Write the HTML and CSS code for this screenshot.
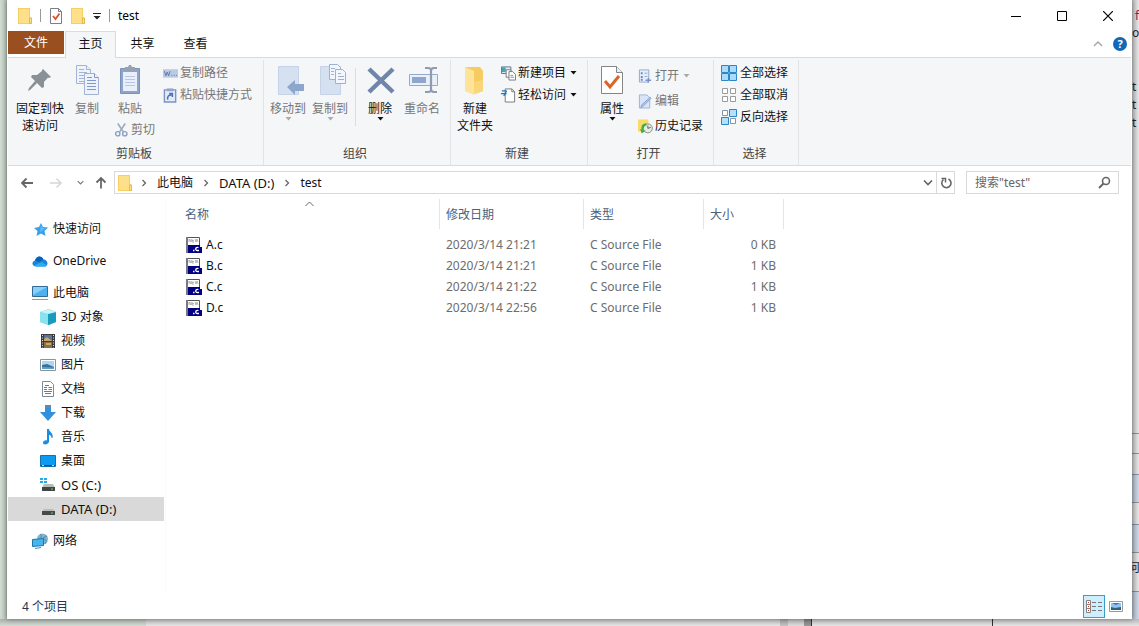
FILE: index.html
```html
<!DOCTYPE html>
<html lang="zh-CN">
<head>
<meta charset="utf-8">
<title>test</title>
<link rel="stylesheet" href="styles.css">
</head>
<body>
<svg class="defs" aria-hidden="true">
  <symbol id="folder" viewBox="0 0 14 16"><path d="M0 0h12v9l2 1v6H0z" fill="#f6cf63"/><path d="M1 1h10v14H1z" fill="#ffe08a"/><path d="M11.500 10h2v5.500h-2z" fill="#fbe28f" stroke="#e5b94c"/></symbol>
  <symbol id="caret" viewBox="0 0 7 4"><path d="M0.500 0h6L3.500 3.500z" fill="currentColor"/></symbol>
  <symbol id="chev-r" viewBox="0 0 6 8"><path d="M1.500 1l3 3-3 3" fill="none" stroke="#666" stroke-width="1.300"/></symbol>
  <symbol id="chev-d" viewBox="0 0 10 7"><path d="M1 1.500l4 4 4-4" fill="none" stroke="currentColor" stroke-width="1.700"/></symbol>
  <symbol id="cfile" viewBox="0 0 16 16"><path d="M.5.500h13v15H.5z" fill="#fff" stroke="#555"/><path d="M0 0h2v16H0z" fill="#778"/><path d="M3 5V2l2 3V2M6 3.500h2M6 2v3h2M9 2l1 3 1-3 1 3" stroke="#999" stroke-width=".7" fill="none"/><path d="M2 8h12v2h2v6H2z" fill="#000080"/><path d="M12.500 10.500c-3-1-4 3-1 3h1.500M7 13.500h1.500" stroke="#fff" stroke-width="1.300" fill="none"/></symbol>
</svg>

<div class="desk desk-left"></div>

<main class="window">
  <header class="titlebar">
    <svg class="i-folder"><use href="#folder"/></svg>
    <span class="bar"></span>
    <button class="plain" aria-label="属性"><svg width="14" height="16" viewBox="0 0 14 16"><path d="M1.500.500h8l3 3v12h-11z" fill="#fff" stroke="#7d7d88"/><path d="M9.500.500v3h3" fill="none" stroke="#7d7d88"/><path d="M4 8l2.500 3L10.500 5.500" fill="none" stroke="#d4552a" stroke-width="1.800"/></svg></button>
    <button class="plain" aria-label="新建文件夹"><svg class="i-folder"><use href="#folder"/></svg></button>
    <button class="plain" aria-label="自定义快速访问工具栏"><svg width="8" height="8" viewBox="0 0 8 8"><path d="M0 1.500h8" stroke="#222"/><path d="M.5 4h7L4 7.500z" fill="#222"/></svg></button>
    <span class="bar"></span>
    <h1 class="title">test</h1>
    <div class="controls">
      <button class="control" aria-label="最小化"><svg width="10" height="10"><path d="M0 5.500h10" stroke="#000"/></svg></button>
      <button class="control" aria-label="最大化"><svg width="10" height="10"><path d="M.5.500h9v9h-9z" fill="none" stroke="#000"/></svg></button>
      <button class="control" aria-label="关闭"><svg width="10" height="10"><path d="M0 0l10 10M10 0L0 10" stroke="#000" stroke-width="1.200"/></svg></button>
    </div>
  </header>

  <nav class="tabs">
    <button class="tab tab-file">文件</button>
    <button class="tab tab-active">主页</button>
    <button class="tab">共享</button>
    <button class="tab">查看</button>
    <div class="tabs-end">
      <button class="plain" aria-label="折叠功能区"><svg width="10" height="6"><path d="M1 5l4-4 4 4" fill="none" stroke="#aaa" stroke-width="1.500"/></svg></button>
      <button class="help" aria-label="帮助">?</button>
    </div>
  </nav>

  <section class="ribbon">
    <div class="group group-first">
      <div class="tools">
        <button class="big wide"><svg viewBox="0 0 32 32"><path d="M19 5l8 8-2 1-1-.5-4 4.500v5l-2 1-5-5-7 7-2 1 1-3 6-7-4-4 1-2h5l5-4v-1z" fill="#899096"/></svg>固定到快速访问</button>
        <button class="big dim"><svg viewBox="0 0 32 32"><g fill="#eef3fb" stroke="#a3b4d2"><path d="M5.500 1.500h10l4 4v14h-14z"/><path d="M15.500 1.500v4h4M8 5.500h5M8 8.500h8M8 11.500h6M8 14.500h5M8 17.500h5"/><path d="M13.500 9.500h10l4 4v17h-14z"/><path d="M23.500 9.500v4h4M16 13.500h5M16 16.500h9M16 19.500h9M16 22.500h9M16 25.500h9" stroke="#7f9aca"/></g></svg>复制</button>
        <div class="stack stack-paste">
          <button class="big narrow dim"><svg viewBox="0 0 32 32"><path d="M6.500 4.500h19v25h-19z" fill="#8ea4cb" stroke="#7c91ba"/><path d="M9 8h14v19H9z" fill="#e9effa"/><path d="M11 12.500h10M11 15.500h10M11 18.500h10M11 21.500h10" stroke="#b7c6e2"/><path d="M11 3h3l1-2h2l1 2h3v4H11z" fill="#96a1b2"/></svg>粘贴</button>
          <button class="small dim"><svg viewBox="0 0 16 16"><path d="M4 1l6 9M12 1L6 10" stroke="#9aa8c0" stroke-width="1.700"/><circle cx="4" cy="12" r="2.300" fill="none" stroke="#8b9fc8" stroke-width="1.500"/><circle cx="11.500" cy="12" r="2.300" fill="none" stroke="#8b9fc8" stroke-width="1.500"/></svg>剪切</button>
        </div>
        <div class="stack">
          <button class="small dim"><svg viewBox="0 0 16 16"><path d="M0 4h16v9H0z" fill="#b9c9e6"/><path d="M1.500 6l1.500 5 1.500-4L6 11l1.500-5M9 10.500h1M11.500 10.500h1M14 10.500h1" stroke="#5d77ab" fill="none"/></svg>复制路径</button>
          <button class="small dim"><svg viewBox="0 0 16 16"><path d="M1.500 2.500h12v13h-12z" fill="#e4ebf7" stroke="#7b94c4" stroke-width="1.500"/><path d="M4 1h7v3H4z" fill="#93a5c6"/><path d="M5 13c-.5-4 1-5 4-5M6.500 6.500H10V10" stroke="#4d70b5" stroke-width="1.600" fill="none"/></svg>粘贴快捷方式</button>
        </div>
      </div>
      <div class="caption">剪贴板</div>
    </div>

    <div class="group">
      <div class="tools">
        <button class="big dim"><svg viewBox="0 0 32 32"><path d="M6.500 2.500h20v28h-20z" fill="#d5e0f0" stroke="#c5d3e8"/><path d="M15 23l8-7v4h9v7h-9v4z" fill="#8da6cc"/></svg>移动到<svg class="caret"><use href="#caret"/></svg></button>
        <button class="big dim"><svg viewBox="0 0 32 32"><path d="M6.500 2.500h20v28h-20z" fill="#d5e0f0" stroke="#c5d3e8"/><g fill="#f3f7fd" stroke="#9db1d3"><path d="M15.500.500h8l3 3v12h-11z"/><path d="M21.500 5.500h7l3 3v11h-10z"/><path d="M24 9.500h3M24 12.500h6M24 15.500h6M17 4.500h4M17 7.500h3M17 10.500h3"/></g></svg>复制到<svg class="caret"><use href="#caret"/></svg></button>
        <span class="split"></span>
        <button class="big"><svg viewBox="0 0 32 32"><path d="M5 5l24 23M29 5L5 28" stroke="#7085aa" stroke-width="4.500"/></svg>删除<svg class="caret"><use href="#caret"/></svg></button>
        <button class="big dim"><svg viewBox="0 0 32 32"><path d="M3.500 10.500h28v11h-28z" fill="#eaf0fa" stroke="#94aad2"/><path d="M6 13h14v6H6z" fill="#8fa5cd"/><path d="M19 4h3c3 0 3 1 3 3v18c0 2 0 3-3 3h-3M31 4h-3c-2 0-3 1-3 3M31 28h-3c-2 0-3-1-3-3" fill="none" stroke="#8e9bb0" stroke-width="2.200"/></svg>重命名</button>
      </div>
      <div class="caption">组织</div>
    </div>

    <div class="group">
      <div class="tools spaced">
        <button class="big"><svg viewBox="0 0 32 32"><path d="M6 3h15l3 4v20l-8 3-10-3z" fill="#f5cb62"/><path d="M6 3l9 4v24l-9-4z" fill="#ffe396"/><path d="M15 18l9-2v11l-9 3z" fill="#f9d779"/></svg>新建<br>文件夹</button>
        <div class="stack">
          <button class="small"><svg viewBox="0 0 16 16"><path d="M.5 1.500h10v7H.5z" fill="#dff2f7" stroke="#53758c"/><path d="M1 2h4v5H1z" fill="#4e9db3"/><path d="M5.500 4.500h5v8h-5z" fill="#fff" stroke="#777"/><path d="M8.500 6.500h4l3 3v6h-7z" fill="#fff" stroke="#777"/><path d="M10 10.500h3M10 12.500h4" stroke="#5e9bd0"/></svg>新建项目<svg class="caret"><use href="#caret"/></svg></button>
          <button class="small"><svg viewBox="0 0 16 16"><path d="M4.500 1.500h7l3 3v11h-10z" fill="#fff" stroke="#777"/><path d="M11.500 1.500v3h3" fill="none" stroke="#777"/><path d="M1 3.500h5M0 6.500h6M6 3.500L3 9" stroke="#2777b8" stroke-width="1.400" fill="none"/></svg>轻松访问<svg class="caret"><use href="#caret"/></svg></button>
        </div>
      </div>
      <div class="caption">新建</div>
    </div>

    <div class="group">
      <div class="tools spaced">
        <button class="big"><svg viewBox="0 0 32 32"><path d="M5.500 2.500h15l6 6v21h-21z" fill="#fff" stroke="#858585"/><path d="M20.500 2.500v6h6" fill="#eee" stroke="#858585"/><path d="M9 17l5 6 9-11" fill="none" stroke="#de6326" stroke-width="3"/></svg>属性<svg class="caret"><use href="#caret"/></svg></button>
        <div class="stack stack-loose">
          <button class="small dim"><svg viewBox="0 0 16 16"><path d="M1.500 1.500h10v13h-10z" fill="#e7eefa" stroke="#8fa7d1"/><path d="M3 4h2v2H3zM3 8h2v2H3zM3 11h2v2H3z" fill="#6c8cc5"/><path d="M7 5h3M7 8.500h3" stroke="#8fa7d1"/><path d="M8 12.500h6M11 10v5" stroke="#7894c4" stroke-width="1.500"/></svg>打开<svg class="caret"><use href="#caret"/></svg></button>
          <button class="small dim"><svg viewBox="0 0 16 16"><path d="M1.500 1.500h8l3 3v11h-11z" fill="#d9e5f6" stroke="#9eb2d7"/><path d="M14 5L5 14l-2 1 1-3 9-8z" fill="#b5c8e6" stroke="#6b8dc4" stroke-width=".7"/></svg>编辑</button>
          <button class="small"><svg viewBox="0 0 16 16"><path d="M0 1h11v13H0z" fill="#f9dc68"/><circle cx="10.500" cy="10.500" r="4.800" fill="#e6ebe7" stroke="#7d8b83"/><path d="M10.500 7.500v3l3-1" stroke="#555" fill="none"/><path d="M9 5c-5 0-6 4-5 7l-2-1 2 5 4-3-2-.5c-1-2 0-4 3-5z" fill="#4aab3e"/></svg>历史记录</button>
        </div>
      </div>
      <div class="caption">打开</div>
    </div>

    <div class="group group-last">
      <div class="tools">
        <div class="stack stack-select">
          <button class="small"><svg viewBox="0 0 16 16"><path d="M.5.500h7v7h-7zM8.500.500h7v7h-7zM.5 8.500h7v7h-7zM8.500 8.500h7v7h-7z" fill="#a9dbfa" stroke="#2f86c5"/></svg>全部选择</button>
          <button class="small"><svg viewBox="0 0 16 16"><path d="M1.500 1.500h5v5h-5zM9.500 1.500h5v5h-5zM1.500 9.500h5v5h-5zM9.500 9.500h5v5h-5z" fill="#fff" stroke="#9a9a9a"/></svg>全部取消</button>
          <button class="small"><svg viewBox="0 0 16 16"><path d="M8.500.500h7v7h-7zM.5 8.500h7v7h-7z" fill="#b5e0fb" stroke="#2f86c5"/><path d="M1.500 1.500h5v5h-5zM9.500 9.500h5v5h-5z" fill="#fff" stroke="#8397aa"/></svg>反向选择</button>
        </div>
      </div>
      <div class="caption">选择</div>
    </div>
  </section>

  <div class="addressrow">
    <div class="history">
      <button class="plain" aria-label="后退"><svg width="14" height="12"><path d="M13 6H2M6.500 1.500L2 6l4.500 4.500" fill="none" stroke="#666" stroke-width="1.800"/></svg></button>
      <button class="plain" aria-label="前进"><svg width="14" height="12"><path d="M1 6h11M7.500 1.500L12 6l-4.500 4.500" fill="none" stroke="#d6d6d6" stroke-width="1.500"/></svg></button>
      <button class="plain recent" aria-label="最近浏览的位置"><svg width="7" height="5" viewBox="0 0 10 7"><use href="#chev-d" width="10" height="7"/></svg></button>
      <button class="plain" aria-label="上移"><svg width="12" height="13"><path d="M6 12.500V2M1.500 6.500L6 2l4.500 4.500" fill="none" stroke="#666" stroke-width="1.800"/></svg></button>
    </div>
    <div class="address">
      <svg class="i-folder"><use href="#folder"/></svg>
      <svg class="chev"><use href="#chev-r"/></svg>
      <button class="plain crumb">此电脑</button>
      <svg class="chev"><use href="#chev-r"/></svg>
      <button class="plain crumb drive">DATA (D:)</button>
      <svg class="chev"><use href="#chev-r"/></svg>
      <button class="plain crumb">test</button>
      <button class="plain drop" aria-label="以前的位置"><svg width="10" height="7"><use href="#chev-d"/></svg></button>
      <button class="plain refresh" aria-label="刷新"><svg width="12" height="12"><path d="M8.500 2A4.600 4.600 0 1 1 3.500 2.500" fill="none" stroke="#666" stroke-width="1.600"/><path d="M1.500 1.500h4v4" fill="none" stroke="#666" stroke-width="1.500"/></svg></button>
    </div>
    <div class="search">
      <input type="text" aria-label="搜索" placeholder='搜索"test"'>
      <svg width="13" height="13"><circle cx="8" cy="5" r="3.500" fill="none" stroke="#666" stroke-width="1.600"/><path d="M5.500 7.500L1 12" stroke="#666" stroke-width="2"/></svg>
    </div>
  </div>

  <div class="content">
    <nav class="tree">
      <a class="node" href="#"><svg viewBox="0 0 16 16"><path d="M9 2l2 4 5 .5-3.500 3.500 1 5-4.500-2.500L4.500 15l1-5L2 7l5-1z" fill="#37a0ea"/><path d="M9 4l1.500 3 3 .5L8 11z" fill="#5cc0f8"/></svg>快速访问</a>
      <a class="node" href="#"><svg viewBox="0 0 16 16"><path d="M4 13.500C0 13.500-1 9 3 7.500 4 3 9 2 11.500 6.500c4 0 5.500 5 2 7z" fill="#1686dc"/><path d="M3 7.500C5 3 9 2 11.500 6.500L7 9z" fill="#0a62b8"/><path d="M2 12.500L10 9l5 3.500-1.500 1H4z" fill="#32aaf1"/></svg>OneDrive</a>
      <div class="branch">
        <a class="node" href="#"><svg viewBox="0 0 16 16"><path d="M.5 1.500h15v10H.5z" fill="#4db1ef" stroke="#356b93"/><path d="M1 2h14L1 10z" fill="#86d0fa"/><path d="M0 14.500h16" stroke="#8b9aa7"/></svg>此电脑</a>
        <a class="node sub" href="#"><svg viewBox="0 0 16 16"><path d="M0 3l9-3 7 3v10l-7 3-9-3z" fill="#42bdd8"/><path d="M0 3l8 2v11l-8-3z" fill="#8be2ef"/><path d="M8 5l8-2v10l-8 3z" fill="#199cbb"/><path d="M0 3l9-3 7 3-8 2z" fill="#c5f4fa"/></svg>3D 对象</a>
        <a class="node sub" href="#"><svg viewBox="0 0 16 16"><path d="M1 1h14v14H1z" fill="#3b3b42"/><path d="M4 2h8v6H4z" fill="#56759f"/><path d="M4 9h8v6H4z" fill="#88704a"/><path d="M4 6l3-2 5 4H4zM6 10h5v2H6z" fill="#cda85c"/><path d="M2.500 2v13M13.500 2v13" stroke="#ddd" stroke-dasharray="1 1.500"/></svg>视频</a>
        <a class="node sub" href="#"><svg viewBox="0 0 16 16"><path d="M.5 2.500h15v11H.5z" fill="#fff" stroke="#8793a0"/><path d="M2 4h12v8H2z" fill="#a6dbf8"/><path d="M2 8l5-1 7 3v1H2z" fill="#3e6f94"/><path d="M2 10l12 .5V12H2z" fill="#61a3c4"/></svg>图片</a>
        <a class="node sub" href="#"><svg viewBox="0 0 16 16"><path d="M2.500.500h8l3 3v12h-11z" fill="#fff" stroke="#7c8b99"/><path d="M5 4.500h4M4 6.500h3M8.500 6.500H12M4 8.500h3M8.500 8.500H12M4 10.500h8M5 12.500h6" stroke="#3988c7"/></svg>文档</a>
        <a class="node sub" href="#"><svg viewBox="0 0 16 16"><path d="M5 0h6v7h5l-8 9-8-9h5z" fill="#3291dc"/><path d="M5 0h6v3H5z" fill="#6189b0"/></svg>下载</a>
        <a class="node sub" href="#"><svg viewBox="0 0 16 16"><path d="M7 0h2c0 3 5 4 3.500 9h-1c0-2-1-3-2.500-3v7c-1 3-6 3-6 1s2-3 4-2.500z" fill="#188de4"/></svg>音乐</a>
        <a class="node sub" href="#"><svg viewBox="0 0 16 16"><path d="M.5 2.500h15v11H.5z" fill="#0d9bf1" stroke="#1770ad"/><path d="M1 12.500h14" stroke="#0a4e80"/><path d="M2 12.500h2M12 12.500h2" stroke="#b6e6ff"/></svg>桌面</a>
        <a class="node sub drive" href="#"><svg viewBox="0 0 16 16"><path d="M0 1h3v2H0zM4 1h3v2H4zM0 4h3v2H0zM4 4h3v2H4z" fill="#20aeea"/><path d="M4 7h9l2 4H2z" fill="#b9bbb9"/><path d="M2 10h13v4H2z" fill="#3f4643"/><path d="M11 12h2" stroke="#5fe071"/></svg>OS (C:)</a>
        <a class="node sub drive selected" href="#"><svg viewBox="0 0 16 16"><path d="M4 8h9l2 3H2z" fill="#bdbdbd"/><path d="M2 10h13v4H2z" fill="#484a49"/><path d="M11 12h2" stroke="#62d175"/></svg>DATA (D:)</a>
      </div>
      <a class="node" href="#"><svg viewBox="0 0 16 16"><circle cx="10.500" cy="6" r="5.500" fill="#7fb3cf"/><path d="M8 1c3 2-1 4 3 5s4 2 2 5M15 3l-4 2" stroke="#4e89a9" fill="none"/><path d="M.5 6.500l11-1v7l-11 1z" fill="#45b5ee" stroke="#1c77ad"/><path d="M3 15.500l6-1" stroke="#3d8ab8"/></svg>网络</a>
    </nav>

    <div class="files">
      <svg class="sort" width="9" height="6"><path d="M.5 5l4-4 4 4" fill="none" stroke="#666"/></svg>
      <table>
        <thead>
          <tr><th class="c-name"><div>名称</div></th><th class="c-date"><div>修改日期</div></th><th class="c-type"><div>类型</div></th><th class="c-size"><div>大小</div></th></tr>
        </thead>
        <tbody>
          <tr><td><span class="file"><svg><use href="#cfile"/></svg>A.c</span></td><td>2020/3/14 21:21</td><td>C Source File</td><td class="num">0 KB</td></tr>
          <tr><td><span class="file"><svg><use href="#cfile"/></svg>B.c</span></td><td>2020/3/14 21:21</td><td>C Source File</td><td class="num">1 KB</td></tr>
          <tr><td><span class="file"><svg><use href="#cfile"/></svg>C.c</span></td><td>2020/3/14 21:22</td><td>C Source File</td><td class="num">1 KB</td></tr>
          <tr><td><span class="file"><svg><use href="#cfile"/></svg>D.c</span></td><td>2020/3/14 22:56</td><td>C Source File</td><td class="num">1 KB</td></tr>
        </tbody>
      </table>
    </div>
  </div>

  <footer class="status">
    <span>4 个项目</span>
    <div class="views">
      <button class="view view-on" aria-label="详细信息"><svg width="16" height="14"><path d="M.5.500h4v4h-4zM.5 4.500h4v4h-4zM.5 8.500h4v4h-4z" fill="#fff" stroke="#8a8078"/><path d="M2 2.500h1M2 6.500h1M2 10.500h1" stroke="#b33"/><path d="M6 2.500h4M12 2.500h4M6 6.500h4M12 6.500h4M6 10.500h4M12 10.500h4" stroke="#777"/></svg></button>
      <button class="view" aria-label="大图标"><svg width="14" height="11"><path d="M.5.500h13v10H.5z" fill="#fff" stroke="#999"/><path d="M2 2h10v7H2z" fill="#8cc5f2"/><path d="M2 6l4 1 6-1v3H2z" fill="#2f6377"/><path d="M3 2h8l-4 2z" fill="#4668cf"/></svg></button>
    </div>
  </footer>
</main>

<div class="desk desk-right">
  <span class="scrap s1">f</span><span class="scrap s2">o</span><span class="scrap s3">t</span><span class="scrap s4">t</span><span class="scrap s5">t</span><span class="scrap s6">何</span>
</div>
<div class="desk desk-bottom"></div>
</body>
</html>
```

FILE: styles.css
```css
* { box-sizing: border-box; }

body {
  margin: 0;
  height: 100vh;
  display: grid;
  grid-template: minmax(0, 1fr) 7px / 7px minmax(0, 1fr) 7px;
  overflow: hidden;
  background: #dcdcdc;
  color: #111;
  font: 12px/18px "Noto Sans", "Noto Sans CJK SC", sans-serif;
}

button, input { font: inherit; color: inherit; margin: 0; padding: 0; border: 0; background: none; }
button { display: flex; }
svg { flex: none; display: block; }
.defs { position: absolute; width: 0; height: 0; }
.i-folder { width: 14px; height: 16px; }
.caret { width: 7px; height: 4px; }

/* Desktop behind the window */
.desk-left { background: linear-gradient(90deg, #d2dcd3, #bfcbc1 60%, #a9b5ab); }
.desk-right {
  position: relative;
  overflow: hidden;
  background:
    linear-gradient(90deg, #0003, #0000),
    linear-gradient(#e6e6e6 433px, #999 433px 434px, #e6e6e6 434px 453px, #999 453px 454px, #e6e6e6 454px 474px, #8c98ab 474px 475px, #cfd9e8 475px 502px, #999 502px 503px, #e6e6e6 503px 524px, #8c98ab 524px 525px, #cfd9e8 525px 552px, #999 552px 553px, #e6e6e6 553px 591px, #8c98ab 591px 592px, #cfd9e8 592px);
}
.scrap { position: absolute; left: 0; color: #223; }
.s1 { top: 7px; left: 3px; color: #824; }
.s2 { top: 24px; }
.s3 { top: 78px; }
.s4 { top: 96px; }
.s5 { top: 114px; }
.s6 { top: 559px; left: -4px; }
.desk-bottom {
  grid-column: 1 / -1;
  background:
    linear-gradient(#0003, #0000),
    linear-gradient(90deg, #d3dcd4 146px, #e6e6e6 146px 780px, #c4c4c4 780px 788px, #dedede 788px 804px, #999 804px 811px, #333 811px 812px, #e6e6e6 812px 992px, #333 992px 993px, #e6e6e6 993px);
}

.window {
  position: relative;
  z-index: 1;
  display: flex;
  flex-direction: column;
  min-width: 0;
  padding: 0 1px;
  background: #fff;
  box-shadow: 0 0 5px #0006;
}

.plain { align-items: center; justify-content: center; }
.drive { font-size: 13px; }

.titlebar { display: flex; align-items: center; gap: 8px; height: 31px; padding-left: 10px; }
.bar { width: 1px; height: 13px; background: #999; }
.title { margin: 0; font-size: 12px; font-weight: 400; color: #000; }
.controls { display: flex; align-self: stretch; margin-left: auto; }
.control { width: 46px; align-items: center; justify-content: center; }

.tabs { display: flex; height: 27px; border-bottom: 1px solid #dadbdc; }
.tab { width: 53px; height: 25px; align-items: center; justify-content: center; }
.tab-file { width: 56px; height: 23px; margin-right: 1px; background: #9a4f20; color: #fff; }
.tab-active { width: 51px; height: 27px; padding-bottom: 2px; background: #f5f6f7; border: 1px solid #dadbdc; border-bottom: 0; }
.tabs-end { display: flex; align-items: center; gap: 10px; margin-left: auto; padding-right: 4px; }
.help { width: 14px; height: 14px; border-radius: 50%; align-items: center; justify-content: center; background: #1468b5; color: #fff; font-size: 11px; font-weight: 700; line-height: 14px; }

.ribbon { display: flex; background: #f5f6f7; border-bottom: 1px solid #dadbdc; padding-top: 2px; }
.group { display: flex; flex-direction: column; padding: 0 10px 0 6px; border-right: 1px solid #e2e3e4; }
.group-first { padding: 0 11px 0 8px; }
.group-last { padding-left: 7px; }
.tools { display: flex; align-items: flex-start; gap: 6px; height: 85px; padding-top: 4px; }
.group-first .tools { gap: 5px; }
.tools.spaced { gap: 8px; }
.caption { align-self: center; height: 20px; line-height: 18px; color: #444; }
.big { display: flex; flex-direction: column; align-items: center; width: 36px; line-height: 17px; white-space: nowrap; }
.big > svg:first-child { width: 32px; height: 32px; margin-bottom: 4px; }
.wide { width: 48px; white-space: normal; }
.narrow { width: 32px; }
.dim { color: #777; }
.dim .caret { color: #aaa; }
.stack { display: flex; flex-direction: column; gap: 4px; }
.stack-paste { padding: 0 3px 0 4px; }
.stack-loose { gap: 7px; padding-top: 3px; }
.small { align-items: center; gap: 2px; height: 18px; white-space: nowrap; }
.small > svg:first-child { width: 15px; height: 16px; }
.stack-select .small { gap: 3px; }
.stack-select .small > svg { width: 16px; }
.small .caret { margin-left: 2px; }
.split { width: 1px; height: 58px; margin: 4px 0 0 1px; background: #dcdddf; }

.addressrow { display: flex; align-items: center; height: 33px; padding-right: 12px; }
.history { display: flex; align-items: center; justify-content: space-between; width: 106px; padding: 0 7px 0 12px; }
.recent { margin: 0 -4px 0 0; color: #777; }
.address { display: flex; align-items: center; flex: 1; height: 23px; padding-left: 3px; border: 1px solid #d9d9d9; }
.chev { width: 6px; height: 8px; margin: 0 9px; }
.crumb { padding: 0 1px; }
.drop { margin-left: auto; width: 16px; height: 21px; color: #666; }
.refresh { width: 18px; height: 21px; border-left: 1px solid #d9d9d9; }
.search { display: flex; align-items: center; width: 153px; height: 23px; margin-left: 11px; padding: 0 7px 0 8px; border: 1px solid #d9d9d9; }
.search input { flex: 1; min-width: 0; outline: 0; }
.search input::placeholder { color: #666; opacity: 1; }

.content { display: flex; flex: 1; min-height: 0; }
.tree { display: flex; flex-direction: column; gap: 8px; width: 158px; padding: 18px 1px 0 0; border-right: 1px solid #fafafa; }
.node { display: flex; align-items: center; gap: 5px; height: 24px; padding-left: 24px; color: inherit; text-decoration: none; }
.node svg { width: 16px; height: 16px; }
.sub { padding-left: 32px; }
.selected { background: #d9d9d9; }

.files { position: relative; flex: 1; }
.sort { position: absolute; left: 139px; top: 2px; }
table { border-collapse: collapse; table-layout: fixed; width: 618px; }
th { padding: 0 0 5px; font-weight: 400; text-align: left; color: #4c607a; }
th div { height: 30px; padding-left: 6px; line-height: 32px; border-right: 1px solid #e5e5e5; }
.c-name { width: 274px; }
.c-name div { padding-left: 19px; }
.c-date { width: 144px; }
.c-type { width: 120px; }
.c-size { width: 80px; }
td { height: 21px; padding: 0 0 0 6px; color: #6d6d6d; }
td:first-child { padding-left: 20px; color: #111; }
td.num { padding: 0 8px 0 0; text-align: right; }
.file { display: flex; align-items: center; gap: 4px; }
.file svg { width: 16px; height: 16px; }

.status { display: flex; align-items: center; justify-content: space-between; height: 26px; padding: 1px 4px 0 14px; color: #26364d; }
.views { display: flex; }
.view { width: 22px; height: 23px; align-items: center; justify-content: center; }
.view-on { background: #cceeff; border: 1px solid #3b9dc4; }
```
